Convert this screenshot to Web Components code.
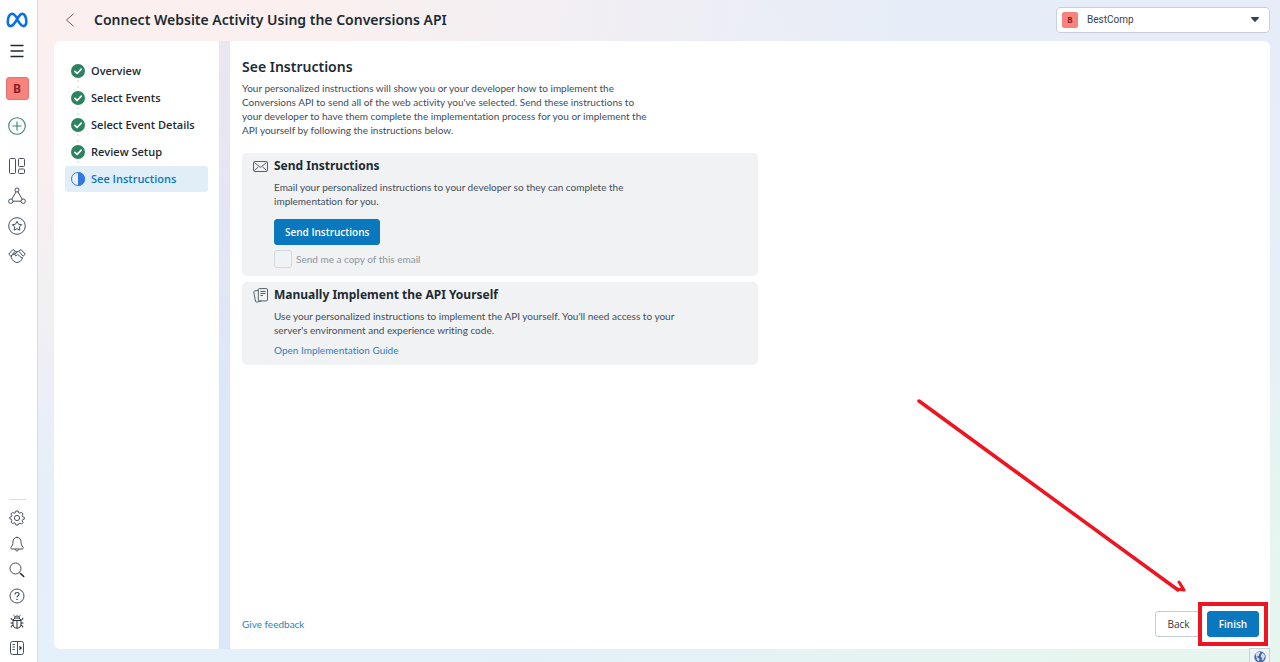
<!DOCTYPE html>
<html lang="en">
<head>
<meta charset="utf-8">
<title>Connect Website Activity Using the Conversions API</title>
<style>
    html, body { height: 100%; margin: 0; }
    body { font-family: Lato, "Noto Sans", sans-serif; font-size: 10px; line-height: 14px; font-variant-ligatures: none; color: #414d58; }
</style>
</head>
<body>
<setup-app>
    <nav-rail slot="rail"></nav-rail>
    <page-header slot="header" account="BestComp">Connect Website Activity Using the Conversions API</page-header>
    <setup-steps slot="steps" steps='["Overview","Select Events","Select Event Details","Review Setup","See Instructions"]' current="4"></setup-steps>
    <setup-content></setup-content>
    <globe-tab slot="overlay"></globe-tab>
</setup-app>

<script>
const icons = {
    logo: `<svg width="22" height="16" viewBox="0 0 22 16" fill="none" stroke-width="2.6"><path stroke="#0a6fe8" d="M11 6C9 3 7.800 1.800 6 1.800 3.500 1.800 1.800 5.500 1.800 9.500c0 2.900 1 4.600 2.900 4.600C7 14.100 8.600 11.500 11 7.500s3.400-5.700 5.400-5.700c2.300 0 3.900 3.500 3.900 7.500 0 3-1 4.800-2.900 4.800-2.400 0-4-2.800-6.400-6.800"/></svg>`,
    menu: `<svg width="14" height="14" viewBox="0 0 14 14" stroke="#1c2b33" stroke-width="1.400"><path d="M.5 1.500h13M.5 7h13M.5 12.500h13"/></svg>`,
    plus: `<svg width="18" height="18" viewBox="0 0 18 18" fill="none" stroke="#31876a" stroke-width="1.100"><circle cx="9" cy="9" r="8.300"/><path d="M9 4.500v9M4.500 9h9"/></svg>`,
    board: `<svg width="18" height="18" viewBox="0 0 18 18" fill="none" stroke="#44515c"><rect x="1.500" y="1.500" width="6" height="15" rx="1"/><rect x="10.500" y="1.500" width="6" height="8" rx="1"/><rect x="10.500" y="12" width="6" height="4.500" rx="1"/></svg>`,
    nodes: `<svg width="18" height="18" viewBox="0 0 18 18" fill="none" stroke="#44515c"><circle cx="9" cy="3" r="2"/><circle cx="2.800" cy="14.200" r="2.200"/><circle cx="15.200" cy="14.200" r="2.200"/><path d="M8 4.900 3.800 12.200M10 4.900l4.200 7.300M5 14.200h8"/></svg>`,
    star: `<svg width="18" height="18" viewBox="0 0 18 18" fill="none" stroke="#44515c"><circle cx="9" cy="9" r="8.300"/><path stroke-linejoin="round" d="m9 4.300 1.500 2.900 3.200.5-2.300 2.300.5 3.200L9 11.700l-2.900 1.500.5-3.200-2.300-2.300 3.200-.5z"/></svg>`,
    hands: `<svg width="18" height="16" viewBox="0 0 18 16" fill="none" stroke="#44515c" stroke-linejoin="round"><path d="M.7 6.200 5 1.500l2.200 1.700-4.300 5zM17.300 6.200 13 1.500l-2.200 1.700 4.300 5zM7.200 3.200 9 4l1.800-.8M9 4 6.500 7c.8 1.200 2.200.8 3.200-.6L14 10M3.500 8l-.3 1.500C4 12 6.500 14.500 9 14.500s5.200-2.300 5.600-5.200M4.300 7 8 5"/></svg>`,
    gear: `<svg width="16" height="16" viewBox="0 0 16 16" fill="none" stroke="#44515c" stroke-linejoin="round"><circle cx="8" cy="8" r="2.600"/><path d="M6.900 1h2.200l.6 1.800 1.100.4 1.700-.8 1.500 1.500-.8 1.700.4 1.100 1.700.6v1.800l-1.700.6-.4 1.100.8 1.700-1.500 1.500-1.700-.8-1.100.4L9.100 15H6.900l-.6-1.800-1.100-.4-1.700.8L2 12.100l.8-1.700-.4-1.100L.7 8.700V7.300l1.700-.6.4-1.100L2 3.900l1.500-1.500 1.700.8 1.100-.4z"/></svg>`,
    bell: `<svg width="16" height="16" viewBox="0 0 16 16" fill="none" stroke="#44515c" stroke-linejoin="round"><path d="M8 1.500c-2.800 0-4 2-4 4.200 0 2.800-.8 4-2 5.500-.7 1 0 1.800 1 1.800h10c1 0 1.700-.8 1-1.800-1.200-1.500-2-2.700-2-5.500 0-2.200-1.200-4.200-4-4.200zM8 .6v.9M6.200 13c.2 2.600 3.400 2.600 3.600 0"/></svg>`,
    search: `<svg width="16" height="16" viewBox="0 0 16 16" fill="none" stroke="#44515c"><circle cx="6.500" cy="6.500" r="5.500"/><path d="m10.300 10.300 1.500 1.500"/><path stroke="#1c2b33" stroke-width="1.600" stroke-linecap="round" d="m11.500 11.500 3.200 3"/></svg>`,
    help: `<svg width="16" height="16" viewBox="0 0 16 16" fill="none" stroke="#44515c"><circle cx="8" cy="8" r="7"/><path stroke-width="1.200" d="M6 6.500c0-1.300.8-2 2-2s2 .7 2 1.800C10 7.700 8 7.700 8 9.300"/><path stroke-width="1.400" d="M8 10.800v1.300"/></svg>`,
    bug: `<svg width="16" height="16" viewBox="0 0 16 16" fill="none" stroke="#282f35"><path d="M4 7.500C4 5 5.500 4 8 4s4 1 4 3.500v2.700c0 2.300-1.500 4-4 4s-4-1.700-4-4zM4 6.500h8M8 6.500v7.700M5.500 4.300C5.600 2.800 6.500 2 8 2s2.400.8 2.500 2.300M5.800 2.400 4.500 1.200M10.200 2.400l1.300-1.200M4 6.200 2.200 5.200V3.800M12 6.200l1.800-1V3.800M4 9H1.500M12 9h2.500M4.200 11l-1.900 1v1.500M11.800 11l1.900 1v1.500"/></svg>`,
    panel: `<svg width="16" height="16" viewBox="0 0 16 16" fill="none" stroke="#44515c"><rect x="1.500" y="1.500" width="13" height="13" rx="2"/><path d="M8.500 1.500v13M3.500 4.500h2.300M3.500 7h2.300M3.500 9.500h2.300"/><path fill="#1c2b33" stroke="none" d="m10.500 5.500 2.500 2.500-2.500 2.500z"/></svg>`,
    back: `<svg width="10" height="14" viewBox="0 0 10 14" fill="none" stroke="#5b6368"><path d="M8.500.8 1.500 7l7 6.200"/></svg>`,
    caret: `<svg width="8" height="5" viewBox="0 0 8 5" fill="#35414c"><path d="M.6 0h6.800c.6 0 .7.500.4.900L4.700 4.600c-.4.400-1 .4-1.400 0L.2.900C-.1.500 0 0 .6 0z"/></svg>`,
    done: `<svg width="14" height="14" viewBox="0 0 14 14" fill="none"><circle cx="7" cy="7" r="7" fill="#2b8360"/><path stroke="#fff" stroke-width="1.700" stroke-linecap="round" stroke-linejoin="round" d="m3.900 7.300 2.200 2.200 4.100-4.400"/></svg>`,
    half: `<svg width="14" height="14" viewBox="0 0 14 14"><circle cx="7" cy="7" r="6.500" fill="#e9f1fb" stroke="#3578e5"/><path fill="#3578e5" d="M7 0a7 7 0 0 1 0 14z"/></svg>`,
    mail: `<svg width="15" height="11" viewBox="0 0 15 11" fill="none" stroke="#56606a"><rect x=".5" y=".5" width="14" height="10" rx="1.200"/><path d="m1.500 1.500 5 4.200c.6.500 1.400.5 2 0l5-4.200M1.500 9.500l4-3.700M13.500 9.500l-4-3.700"/></svg>`,
    docs: `<svg width="15" height="15" viewBox="0 0 15 15" fill="none" stroke="#56606a"><rect x="5.300" y=".6" width="9.200" height="12.300" rx="1"/><path d="M7.500 3.500h5M7.500 5.500h5M7.500 7.500h2.500M5.300 2.200 1.600 3c-.6.200-1 .7-.8 1.300l1.700 9c.1.600.6.900 1.200.8l4.600-1"/></svg>`,
    globe: `<svg width="12" height="12" viewBox="0 0 12 12"><circle cx="6" cy="6" r="5.700" fill="#4468a8"/><path fill="#d3def0" d="M1.500 3C2.700 1.300 4.200.8 5.800.9L6.500 2 5 3.300 4.800 5 3 5.200 3.800 6.800 5.600 8 4.800 10.500 3 9 2.500 6.700zM8 2.200l2 .6 1 2.400-1 2.300-1.200 2-1-.5L8 7 6.700 5.500 7.200 4z"/></svg>`
};

class UiIcon extends HTMLElement {
    constructor() {
        super();
        this.attachShadow({ mode: "open" });
    }

    connectedCallback() {
        this.shadowRoot.innerHTML = `<style>
            :host { display: flex; flex: none; align-items: center; justify-content: center; }
            svg { display: block; }
        </style>${icons[this.getAttribute("name")] || ""}`;
        this.setAttribute("aria-hidden", "true");
    }
}

class UiButton extends HTMLElement {
    constructor() {
        super();
        this.attachShadow({ mode: "open" }).innerHTML = `<style>
            :host { display: inline-block; }
            button { box-sizing: border-box; width: 100%; height: 26px; padding: 0 10px; border: 1px solid #c5cdd8; border-radius: 3px; background: #fff; color: #2d3840; font: 500 10px/14px "Open Sans", sans-serif; cursor: pointer; }
            :host([primary]) button { border-color: #0a78be; background: #0a78be; color: #fff; font-weight: 600; }
        </style>
        <button type="button"><slot></slot></button>`;
    }
}

class NavRail extends HTMLElement {
    constructor() {
        super();
        const link = ([name, label]) => `<a href="#${name}" aria-label="${label}"><ui-icon name="${name}"></ui-icon></a>`;
        const tools = [["board", "Overview"], ["nodes", "Data sources"], ["star", "Custom conversions"], ["hands", "Partner integrations"]];
        const utils = [["gear", "Settings"], ["bell", "Notifications"], ["search", "Search"], ["help", "Help"], ["bug", "Report a problem"], ["panel", "Expand"]];
        this.attachShadow({ mode: "open" }).innerHTML = `<style>
            :host { display: block; border-right: 1px solid #d5dbe5; background: #fff; padding-right: 3px; }
            nav { box-sizing: border-box; height: 100%; display: flex; flex-direction: column; align-items: center; justify-content: space-between; padding: 10px 0 6px; }
            div { display: flex; flex-direction: column; align-items: center; }
            a, button { display: flex; align-items: center; justify-content: center; padding: 0; border: 0; background: none; }
            .top { gap: 17px; }
            .logo { height: 20px; }
            .menu { height: 8px; margin-bottom: 5px; }
            .business { box-sizing: border-box; width: 23px; height: 23px; border: 1px solid #e2756f; border-radius: 3px; background: #f8837c; color: #8a1f2a; font: 700 12px/14px "Noto Sans", sans-serif; }
            .tools { gap: 12px; padding-top: 5px; }
            .tools a { height: 18px; }
            .utils { gap: 10px; }
            .utils a { height: 16px; }
            hr { width: 17px; margin: 0; border: 0; border-top: 1px solid #d9dde5; }
        </style>
        <nav aria-label="Main">
            <div class="top">
                <a class="logo" href="#home" aria-label="Home"><ui-icon name="logo"></ui-icon></a>
                <button class="menu" type="button" aria-label="All tools"><ui-icon name="menu"></ui-icon></button>
                <button class="business" type="button">B</button>
                <button type="button" aria-label="Add"><ui-icon name="plus"></ui-icon></button>
                <div class="tools">${tools.map(link).join("")}</div>
            </div>
            <div class="utils"><hr>${utils.map(link).join("")}</div>
        </nav>`;
    }
}

class PageHeader extends HTMLElement {
    constructor() {
        super();
        this.attachShadow({ mode: "open" }).innerHTML = `<style>
            :host { display: flex; align-items: center; gap: 19px; height: 41px; padding: 0 0 2px 11px; box-sizing: border-box; }
            button { padding: 0; border: 0; background: none; }
            h1 { flex: 1; margin: 0; color: #1c2b33; font: 600 14px/20px "Noto Sans", sans-serif; }
            label { box-sizing: border-box; display: flex; align-items: center; width: 214px; height: 26px; padding: 0 10px 0 5px; border: 1px solid #c8d0dc; border-radius: 4px; background: #fff; }
            .badge { width: 16px; border-radius: 2px; background: #f8837c; color: #8a1f2a; font: 700 8px/16px "Noto Sans", sans-serif; text-align: center; }
            select { flex: 1; min-width: 0; margin-left: 9px; padding: 0; border: 0; appearance: none; background: none; color: #38444f; font: 10px/14px Roboto, sans-serif; }
        </style>
        <button type="button" aria-label="Go back"><ui-icon name="back"></ui-icon></button>
        <h1><slot></slot></h1>
        <label>
            <span class="badge">B</span>
            <select aria-label="Business account"><option></option></select>
            <ui-icon name="caret"></ui-icon>
        </label>`;
    }

    connectedCallback() {
        this.shadowRoot.querySelector("option").textContent = this.getAttribute("account");
    }
}

class SetupSteps extends HTMLElement {
    constructor() {
        super();
        this.attachShadow({ mode: "open" });
    }

    connectedCallback() {
        const steps = JSON.parse(this.getAttribute("steps"));
        const current = Number(this.getAttribute("current"));
        this.shadowRoot.innerHTML = `<style>
            :host { display: block; box-sizing: border-box; padding: 17px 11px; border-radius: 6px 2px 2px 6px; background: #fff; }
            ol { display: flex; flex-direction: column; gap: 1px; margin: 0; padding: 0; list-style: none; }
            li { position: relative; }
            /* dotted connector to the next step */
            li:not(:last-child)::after { content: ""; position: absolute; left: 12px; top: 22px; width: 2px; height: 2px; border-radius: 1px; background: #dcdfe3; box-shadow: 0 6px #dcdfe3; }
            a { display: flex; align-items: center; gap: 6px; height: 26px; padding-left: 6px; border-radius: 3px; color: #1c2b33; font: 600 11px/14px "Open Sans", sans-serif; text-decoration: none; }
            a[aria-current] { background: #e1edf7; color: #0a78be; }
        </style>
        <ol>${steps.map((step, i) => `<li><a href="#step-${i + 1}" ${i === current ? 'aria-current="step"' : ""}>
            <ui-icon name="${i === current ? "half" : "done"}"></ui-icon><span>${step}</span></a></li>`).join("")}</ol>`;
    }
}

class OptionCard extends HTMLElement {
    constructor() {
        super();
        this.attachShadow({ mode: "open" });
    }

    connectedCallback() {
        this.shadowRoot.innerHTML = `<style>
            :host { display: flex; align-items: flex-start; gap: 6px; padding: 4px 11px 8px; border-radius: 5px; background: #f1f2f4; }
            ui-icon { width: 15px; height: 18px; }
            h2 { margin: 0 0 5px; color: #1c2b33; font: 700 12px/18px "Noto Sans", sans-serif; }
        </style>
        <ui-icon name="${this.getAttribute("icon")}"></ui-icon>
        <div>
            <h2>${this.getAttribute("heading")}</h2>
            <slot></slot>
        </div>`;
    }
}

class SetupContent extends HTMLElement {
    constructor() {
        super();
        this.attachShadow({ mode: "open" }).innerHTML = `<style>
            :host { box-sizing: border-box; height: 100%; display: flex; flex-direction: column; justify-content: space-between; padding: 16px 11px 12px 12px; border-radius: 2px 6px 6px 2px; background: #fff; position: relative; }
            h1 { margin: 0 0 4px; color: #1c2b33; font: 600 14px/20px "Noto Sans", sans-serif; }
            p { margin: 0; }
            .intro { max-width: 412px; margin-bottom: 16px; }
            .cards { display: flex; flex-direction: column; gap: 6px; max-width: 516px; }
            .cards p { max-width: 412px; }
            a { color: #2e7fc0; text-decoration: none; }
            .cards a { display: inline-block; margin-top: 6px; }
            .cards ui-button { margin: 11px 0 5px; }
            label { display: flex; align-items: center; gap: 4px; color: #8d949c; }
            input { box-sizing: border-box; width: 18px; height: 18px; margin: 0; appearance: none; border: 1px solid #d3d9e0; border-radius: 3px; background: #eff3f6; }
            footer { display: flex; align-items: center; justify-content: space-between; }
            .actions { display: flex; gap: 5px; }
            .back { min-width: 47px; }
            .finish { min-width: 52px; position: relative; }
            .finish::after { content: ""; position: absolute; inset: -9px; border: 4px solid #ee1420; pointer-events: none; }
            .pointer { position: absolute; right: 83px; bottom: 55px; pointer-events: none; }
        </style>
        <div>
            <h1>See Instructions</h1>
            <p class="intro">Your personalized instructions will show you or your developer how to implement the Conversions API to send all of the web activity you've selected. Send these instructions to your developer to have them complete the implementation process for you or implement the API yourself by following the instructions below.</p>
            <div class="cards">
                <option-card icon="mail" heading="Send Instructions">
                    <p>Email your personalized instructions to your developer so they can complete the implementation for you.</p>
                    <ui-button primary>Send Instructions</ui-button>
                    <label><input type="checkbox" disabled>Send me a copy of this email</label>
                </option-card>
                <option-card icon="docs" heading="Manually Implement the API Yourself">
                    <p>Use your personalized instructions to implement the API yourself. You'll need access to your server's environment and experience writing code.</p>
                    <a href="#guide">Open Implementation Guide</a>
                </option-card>
            </div>
        </div>
        <footer>
            <a href="#feedback">Give feedback</a>
            <div class="actions">
                <ui-button class="back">Back</ui-button>
                <ui-button class="finish" primary>Finish</ui-button>
            </div>
        </footer>
        <svg class="pointer" width="270" height="196" viewBox="0 0 270 196" fill="none" stroke="#ee1420" stroke-width="3.500" stroke-linecap="round" aria-hidden="true"><path d="m2 3 259 189"/><path stroke-width="3" stroke-linejoin="round" d="m260 191 7 1-5-8"/></svg>`;
    }
}

class GlobeTab extends HTMLElement {
    constructor() {
        super();
        this.attachShadow({ mode: "open" }).innerHTML = `<style>
            :host { position: absolute; right: 10px; bottom: 0; }
            button { box-sizing: border-box; display: flex; width: 21px; height: 14px; padding: 2px 4px 0; overflow: hidden; border: 1px solid #cdd3da; border-bottom: 0; background: #f1f2f5; }
        </style>
        <button type="button" aria-label="Language"><ui-icon name="globe"></ui-icon></button>`;
    }
}

class SetupApp extends HTMLElement {
    constructor() {
        super();
        this.attachShadow({ mode: "open" }).innerHTML = `<style>
            :host { position: relative; display: grid; grid-template-columns: 38px 1fr; min-height: 100vh; overflow: hidden; }
            .page { display: flex; flex-direction: column; min-width: 0; padding: 0 10px 13px 16px; background:
                radial-gradient(ellipse 70% 75% at 0 0, #fbf0ef 30%, #fbf0ef00),
                radial-gradient(ellipse 65% 60% at 100% 100%, #e6f6ee 20%, #e6f6ee00),
                linear-gradient(#e7edf8, #e4f0fa); }
            .panels { flex: 1; display: grid; grid-template-columns: 165px 1fr; column-gap: 11px; border-radius: 6px; background: linear-gradient(#ece6ef, #e3e6f5 30%, #dae8f9 60%); }
        </style>
        <slot name="rail"></slot>
        <div class="page">
            <slot name="header"></slot>
            <main class="panels"><slot name="steps"></slot><slot></slot></main>
        </div>
        <slot name="overlay"></slot>`;
    }
}

customElements.define("ui-icon", UiIcon);
customElements.define("ui-button", UiButton);
customElements.define("nav-rail", NavRail);
customElements.define("page-header", PageHeader);
customElements.define("setup-steps", SetupSteps);
customElements.define("option-card", OptionCard);
customElements.define("setup-content", SetupContent);
customElements.define("globe-tab", GlobeTab);
customElements.define("setup-app", SetupApp);
</script>
</body>
</html>
